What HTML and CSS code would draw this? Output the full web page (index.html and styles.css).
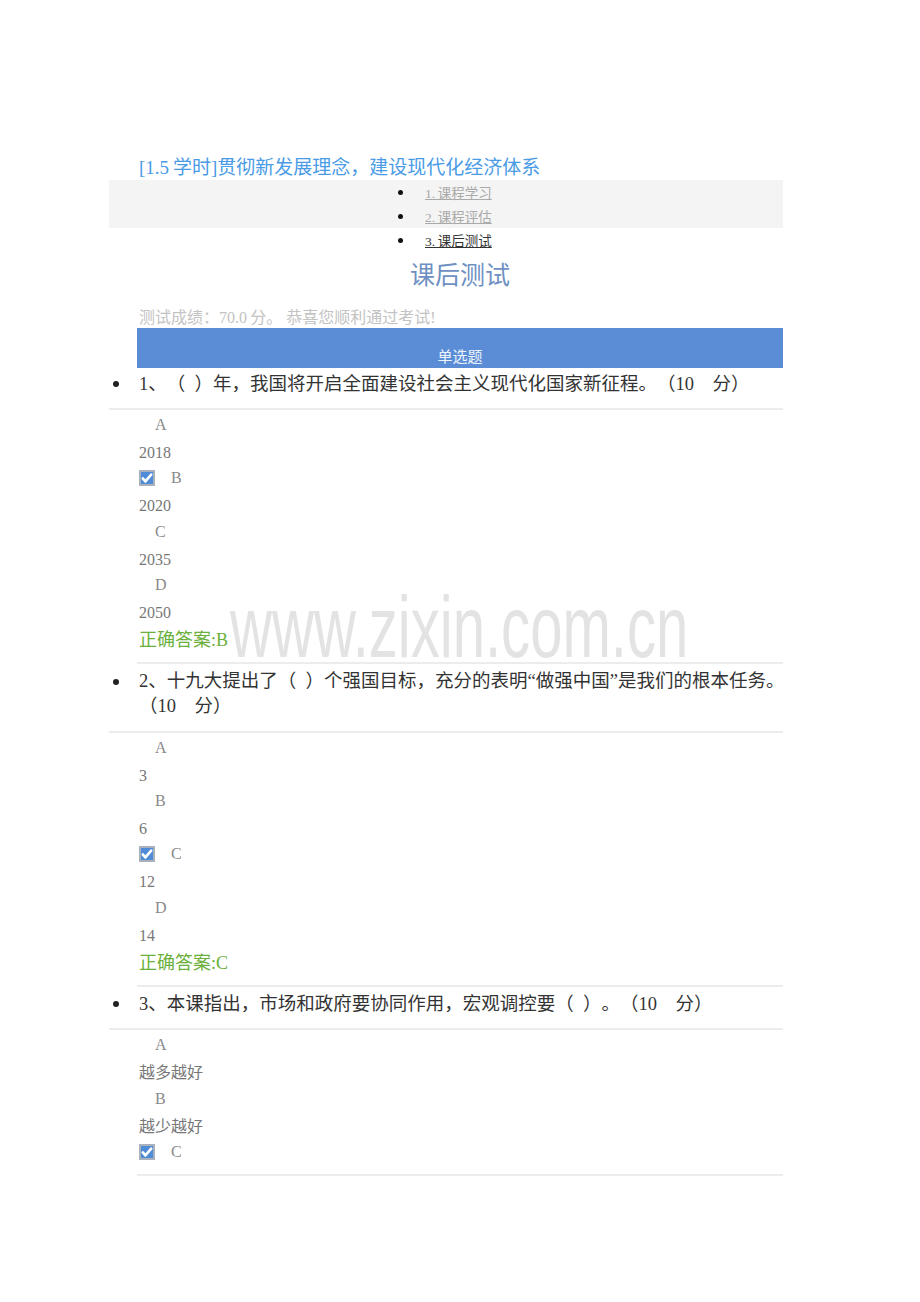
FILE: index.html
```html
<!DOCTYPE html>
<html lang="zh-CN">
<head>
    <meta charset="UTF-8">
    <meta name="viewport" content="width=device-width, initial-scale=1.0">
    <title>课后测试</title>
    <link rel="stylesheet" href="styles.css">
</head>
<body>

<div class="page">
    <h2 class="course-title">[1.5&thinsp;学时]贯彻新发展理念，建设现代化经济体系</h2>

    <!-- Steps -->
    <div class="steps">
        <ul>
            <li><span class="dot"></span><a href="#">1.&thinsp;课程学习</a></li>
            <li><span class="dot"></span><a href="#">2.&thinsp;课程评估</a></li>
            <li class="current"><span class="dot"></span><a href="#">3.&thinsp;课后测试</a></li>
        </ul>
    </div>

    <h1 class="test-title">课后测试</h1>
    <p class="score">测试成绩：70.0&thinsp;分。 恭喜您顺利通过考试!</p>

    <div class="section-bar">单选题</div>

    <ul class="questions">
        <li class="question">
            <div class="q-title"><span class="dot"></span><span class="q-text">1、（&ensp;）年，我国将开启全面建设社会主义现代化国家新征程。（10　分）</span></div>
            <div class="options">
                <div class="opt-key"><span class="key">A</span></div>
                <div class="opt-val">2018</div>
                <div class="opt-key"><span class="check"><svg viewBox="0 0 16 16" width="16" height="16"><rect x="1" y="1" width="14" height="14" fill="#4f8bd6" stroke="#a9b1bd" stroke-width="2"/><path d="M3.8 8.4 L6.4 11.4 L12.2 4.6" fill="none" stroke="#fff" stroke-width="2.6" stroke-linecap="round" stroke-linejoin="round"/></svg></span><span class="key">B</span></div>
                <div class="opt-val">2020</div>
                <div class="opt-key"><span class="key">C</span></div>
                <div class="opt-val">2035</div>
                <div class="opt-key"><span class="key">D</span></div>
                <div class="opt-val">2050</div>
                <div class="answer">正确答案:B</div>
            </div>
        </li>
        <li class="question">
            <div class="q-title"><span class="dot"></span><span class="q-text">2、十九大提出了（&ensp;）个强国目标，充分的表明“做强中国”是我们的根本任务。（10　分）</span></div>
            <div class="options">
                <div class="opt-key"><span class="key">A</span></div>
                <div class="opt-val">3</div>
                <div class="opt-key"><span class="key">B</span></div>
                <div class="opt-val">6</div>
                <div class="opt-key"><span class="check"><svg viewBox="0 0 16 16" width="16" height="16"><rect x="1" y="1" width="14" height="14" fill="#4f8bd6" stroke="#a9b1bd" stroke-width="2"/><path d="M3.8 8.4 L6.4 11.4 L12.2 4.6" fill="none" stroke="#fff" stroke-width="2.6" stroke-linecap="round" stroke-linejoin="round"/></svg></span><span class="key">C</span></div>
                <div class="opt-val">12</div>
                <div class="opt-key"><span class="key">D</span></div>
                <div class="opt-val">14</div>
                <div class="answer">正确答案:C</div>
            </div>
        </li>
        <li class="question">
            <div class="q-title"><span class="dot"></span><span class="q-text">3、本课指出，市场和政府要协同作用，宏观调控要（&ensp;）。（10　分）</span></div>
            <div class="options">
                <div class="opt-key"><span class="key">A</span></div>
                <div class="opt-val">越多越好</div>
                <div class="opt-key"><span class="key">B</span></div>
                <div class="opt-val">越少越好</div>
                <div class="opt-key"><span class="check"><svg viewBox="0 0 16 16" width="16" height="16"><rect x="1" y="1" width="14" height="14" fill="#4f8bd6" stroke="#a9b1bd" stroke-width="2"/><path d="M3.8 8.4 L6.4 11.4 L12.2 4.6" fill="none" stroke="#fff" stroke-width="2.6" stroke-linecap="round" stroke-linejoin="round"/></svg></span><span class="key">C</span></div>
            </div>
        </li>
    </ul>
</div>

<div class="watermark">www.zixin.com.cn</div>

</body>
</html>
```
FILE: styles.css
```css
body {
    margin: 0;
    position: relative;
    font-family: "Liberation Serif", "Noto Sans CJK SC", serif;
    color: #333;
    background-color: #fff;
    text-spacing-trim: space-all;
}
.page {
    width: 674px;
    margin-left: 109px;
    padding-top: 156px;
}
.course-title {
    margin: 0;
    padding-left: 30px;
    font-size: 19px;
    font-weight: normal;
    line-height: 24px;
    color: #4a9be6;
}
/* only the first two rows sit on the grey band */
.steps {
    background: linear-gradient(#f4f4f4, #f4f4f4) no-repeat;
    background-size: 100% 48px;
}
.steps ul {
    list-style: none;
    margin: 0;
    padding: 0;
}
.steps li {
    display: flex;
    align-items: center;
    height: 24px;
    padding-left: 289px;
    font-size: 13.5px;
}
.steps .dot {
    width: 5px;
    height: 5px;
    border-radius: 50%;
    background-color: #111;
    margin-right: 22px;
}
.steps a {
    color: #aaa;
    text-decoration: underline;
}
.steps li.current a {
    color: #333;
}
.test-title {
    margin: 8px 0 16px 28px;
    text-align: center;
    font-size: 25px;
    font-weight: normal;
    line-height: 32px;
    color: #6e90c2;
}
.score {
    margin: 0;
    padding-left: 30px;
    font-size: 16px;
    line-height: 20px;
    color: #c3c3c3;
}
.section-bar {
    margin-left: 28px;
    height: 40px;
    box-sizing: border-box;
    padding-top: 19px;
    background-color: #5b8dd6;
    color: #edf3fb;
    font-size: 15px;
    line-height: 20px;
    text-align: center;
}
.questions {
    list-style: none;
    margin: 0;
    padding: 0;
}
.q-title {
    display: flex;
    align-items: flex-start;
    padding: 5px 0 11.5px;
    border-bottom: 2px solid #ececec;
    font-size: 18.5px;
    line-height: 25px;
    color: #333;
}
.question:first-child .q-title {
    padding-top: 3.5px;
}
.q-title .dot {
    flex: none;
    width: 6px;
    height: 6px;
    margin: 9.5px 20px 0 4px;
    border-radius: 50%;
    background-color: #222;
}
.q-text {
    flex: 1;
    margin-right: -6px;
}
.options {
    margin-left: 28px;
    padding: 2px 0 9px 2px;
    border-bottom: 2px solid #ececec;
    font-size: 16px;
}
.opt-key {
    display: flex;
    align-items: center;
    height: 26px;
    color: #8a8a8a;
}
.opt-key .key {
    margin-left: 16px;
}
.check {
    display: flex;
}
.opt-val {
    padding-top: 2px;
    line-height: 25.3px;
    color: #777;
}
.answer {
    margin-top: 2px;
    font-size: 18px;
    line-height: 26px;
    color: #6bb03c;
}
.watermark {
    position: absolute;
    left: 230px;
    top: 583px;
    font-family: "Liberation Sans", Arial, sans-serif;
    font-size: 88px;
    line-height: 1;
    color: rgba(200, 200, 200, 0.5);
    transform: scaleX(0.66);
    transform-origin: left top;
    white-space: nowrap;
    pointer-events: none;
}
```
